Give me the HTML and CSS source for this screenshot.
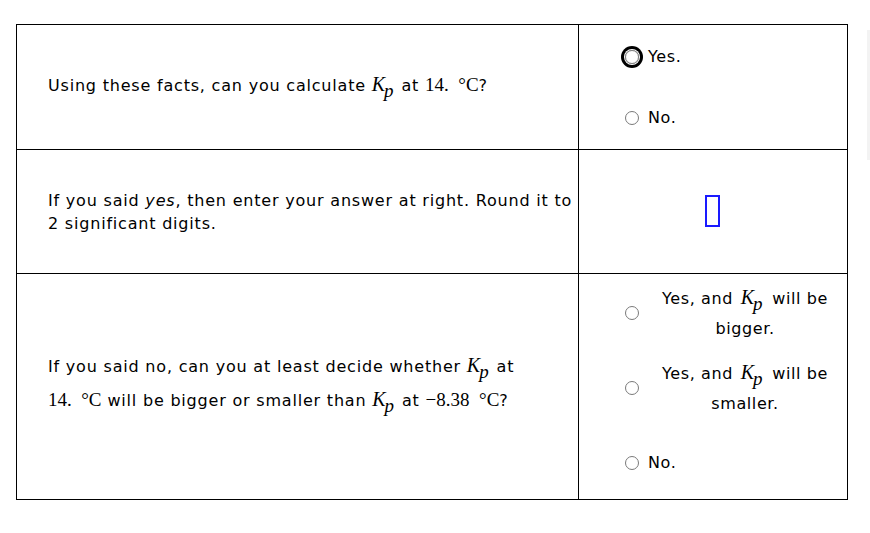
FILE: index.html
```html
<!DOCTYPE html>
<html>
<head>
<meta charset="utf-8">
<link rel="stylesheet" href="styles.css">
</head>
<body>
<table class="qtable">
  <tr class="row1">
    <td class="qcell">
      <p class="q q1">Using these facts, can you calculate <span class="m"><i class="mk">K</i><i class="msub">p</i></span> at <span class="mn">14.&nbsp; °C</span>?</p>
    </td>
    <td class="acell">
      <div class="opts opts1">
        <label class="opt"><span class="radio focus"></span><span class="otext">Yes.</span></label>
        <label class="opt"><span class="radio"></span><span class="otext">No.</span></label>
      </div>
    </td>
  </tr>
  <tr class="row2">
    <td class="qcell">
      <p class="q q2">If you said <em>yes</em>, then enter your answer at right. Round it to 2 significant digits.</p>
    </td>
    <td class="acell center">
      <span class="answer"></span>
    </td>
  </tr>
  <tr class="row3">
    <td class="qcell">
      <p class="q q3">If you said no, can you at least decide whether <span class="m"><i class="mk">K</i><i class="msub">p</i></span> at<br><span class="mn">14.&nbsp; °C</span> will be bigger or smaller than <span class="m"><i class="mk">K</i><i class="msub">p</i></span> at <span class="mn">−8.38&nbsp; °C</span>?</p>
    </td>
    <td class="acell a3">
      <div class="opts opts3">
        <label class="opt"><span class="radio"></span><span class="otext ctext">Yes, and <span class="m"><i class="mk">K</i><i class="msub">p</i></span> will be<br>bigger.</span></label>
        <label class="opt blk2"><span class="radio"></span><span class="otext ctext">Yes, and <span class="m"><i class="mk">K</i><i class="msub">p</i></span> will be<br>smaller.</span></label>
        <label class="opt blk3"><span class="radio"></span><span class="otext">No.</span></label>
      </div>
    </td>
  </tr>
</table>
<div class="scrollhint"></div>
</body>
</html>
```
FILE: styles.css
```css
html, body {
  margin: 0;
  padding: 0;
  background: #fff;
}
body {
  font-family: "DejaVu Sans", Verdana, sans-serif;
  font-size: 16px;
  color: #000;
  padding: 24px 0 0 16px;
}
.qtable {
  border-collapse: collapse;
  width: 832px;
}
.qtable td {
  border: 1px solid #000;
  padding: 0;
  vertical-align: middle;
}
.qcell {
  width: 529px;
  padding: 0 1px 0 31px !important;
}
.row1 td { height: 124px; }
.row2 td { height: 123px; }
.row3 td { height: 225px; }
.q {
  margin: 0;
  line-height: 23px;
  letter-spacing: 0.8px;
}
.q1 { margin-bottom: 4px; }
.q3 {
  line-height: 33px;
  margin-bottom: 8px;
}
.m {
  font-family: "Liberation Serif", "Times New Roman", serif;
  font-size: 20px;
  letter-spacing: 0;
  white-space: nowrap;
}
.mk {
  font-style: italic;
}
.msub {
  font-style: italic;
  font-size: 19px;
  position: relative;
  top: 6px;
  margin-left: -1px;
  margin-right: 2px;
}
.mn {
  font-family: "Liberation Serif", "Times New Roman", serif;
  font-size: 19px;
  letter-spacing: 0;
  white-space: nowrap;
}
.acell {
  padding: 0 0 0 45px !important;
}
.a3 {
  vertical-align: top !important;
}
.acell.center {
  padding: 0 !important;
  text-align: center;
}
.opts {
  display: flex;
  flex-direction: column;
}
.opts1 {
  gap: 38px;
}
.opts3 {
  padding-top: 8px;
}
.blk2 { margin-top: 13px; }
.blk3 { margin-top: 32px; }
.opt {
  display: flex;
  align-items: center;
  gap: 9px;
  letter-spacing: 0.6px;
}
.radio {
  width: 12px;
  height: 12px;
  border: 1px solid #7a7a7a;
  border-radius: 50%;
  flex: none;
  margin-left: 1px;
}
.radio.focus {
  box-shadow: 0 0 0 1px #fff, 0 0 0 4px #000;
}
.otext {
  line-height: 23px;
}
.ctext {
  text-align: center;
  line-height: 30px;
  margin-left: 6px;
  width: 182px;
}
.ctext .m { margin: 0 2px; }
.answer {
  display: inline-block;
  width: 11px;
  height: 28px;
  border: 2px solid #1a1aff;
  vertical-align: middle;
  margin-left: -1px;
  margin-bottom: 2px;
}
.scrollhint {
  position: absolute;
  left: 867px;
  top: 30px;
  width: 3px;
  height: 130px;
  background: #f3f3f3;
}
```
